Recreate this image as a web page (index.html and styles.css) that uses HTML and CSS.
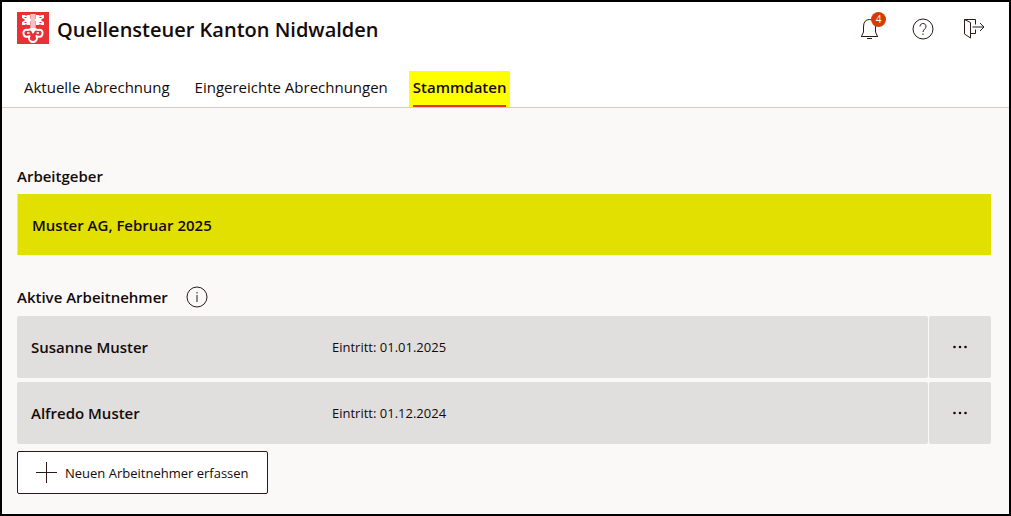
FILE: index.html
```html
<!DOCTYPE html>
<html lang="de">
<head>
    <meta charset="UTF-8">
    <meta name="viewport" content="width=device-width, initial-scale=1">
    <title>Quellensteuer Kanton Nidwalden</title>
    <link rel="stylesheet" href="styles.css">
</head>
<body>
    <div class="app">
        <header class="header">
            <div class="title-bar">
                <svg class="logo" viewBox="0 0 32 32" aria-hidden="true">
                    <rect width="32" height="32" fill="#e73137"/>
                    <!-- key bits and double shaft -->
                    <g fill="#fff">
                        <path d="M13.500 2h5v15h-5z"/>
                        <path d="M5 3h3l1 1 1-1h3v4h1v2h-1v4h-3l-1-1-1 1H5v-3l2-1v-2L5 6z"/>
                        <path d="M27 3h-3l-1 1-1-1h-3v4h-1v2h1v4h3l1-1 1 1h3v-3l-2-1v-2l2-1z"/>
                    </g>
                    <path d="M15 2v14M17 2v14" stroke="#e73137" stroke-width=".6" fill="none"/>
                    <path d="M7.500 5.500h2M7.500 10.500h2M22.500 5.500h2M22.500 10.500h2M5 8h3M24 8h3" stroke="#e73137" fill="none"/>
                    <!-- three-lobed bow of the key -->
                    <path d="M16 20.500C15 17 12.500 17 11 18C7.500 17 6 19.500 6.500 22C7 25 10.500 25.500 12.500 24C11.500 26 12 28.500 14 29.500Q16 30.500 18 29.500C20 28.500 20.500 26 19.500 24C21.500 25.500 25 25 25.500 22C26 19.500 24.500 17 21 18C19.500 17 17 17 16 20.500z" fill="none" stroke="#fff" stroke-width="2" stroke-linejoin="round"/>
                    <path d="M10 21h2.500M19.500 21H22M13 17.500h6" fill="none" stroke="#fff" stroke-width="1.500"/>
                </svg>
                <h1>Quellensteuer Kanton Nidwalden</h1>
                <div class="actions">
                    <button type="button" class="icon-button" aria-label="Benachrichtigungen">
                        <svg viewBox="0 0 22 22" aria-hidden="true">
                            <path d="M3 18.500h17M5.500 14V9q0-7.500 6-7.500t6 7.500v5l2 4.500M5.500 14l-2 4.500M9 20.500h5"/>
                        </svg>
                        <span class="badge">4</span>
                    </button>
                    <button type="button" class="icon-button" aria-label="Hilfe">
                        <svg viewBox="0 0 22 22" aria-hidden="true">
                            <circle cx="11" cy="11" r="10"/>
                            <path d="M8 8.500a3 3 0 1 1 5.200 2q-2.200 1.700-2.200 3.500M11 15.500v1.500"/>
                        </svg>
                    </button>
                    <button type="button" class="icon-button" aria-label="Abmelden">
                        <svg viewBox="0 0 22 22" aria-hidden="true">
                            <path d="M-1.500 1.500l6 3v15.500l-6-4zM-1.500 1.500h11v5M4.500 15.500h5v-4M6.500 9h11.500M14 5l4 4-4 4"/>
                        </svg>
                    </button>
                </div>
            </div>
            <nav class="tabs">
                <a href="#aktuell" class="tab">Aktuelle Abrechnung</a>
                <a href="#eingereicht" class="tab">Eingereichte Abrechnungen</a>
                <a href="#stammdaten" class="tab tab-active" aria-current="page"><span>Stammdaten</span></a>
            </nav>
        </header>

        <main class="content">
            <section class="section">
                <h2>Arbeitgeber</h2>
                <div class="employer">Muster AG, Februar 2025</div>
            </section>

            <section class="section">
                <div class="section-header">
                    <h2>Aktive Arbeitnehmer</h2>
                    <button type="button" class="info-button" aria-label="Information">
                        <svg viewBox="0 0 22 22" aria-hidden="true">
                            <circle cx="11" cy="11" r="10"/>
                            <path d="M11 9v7M11 6v1.500"/>
                        </svg>
                    </button>
                </div>
                <ul class="employees">
                    <li class="employee">
                        <div class="employee-info">
                            <span class="employee-name">Susanne Muster</span>
                            <span class="employee-date">Eintritt: 01.01.2025</span>
                        </div>
                        <button type="button" class="more-button" aria-label="Weitere Aktionen">
                            <svg viewBox="0 0 16 4" aria-hidden="true">
                                <circle cx="2.500" cy="2" r="1.300"/><circle cx="8" cy="2" r="1.300"/><circle cx="13.500" cy="2" r="1.300"/>
                            </svg>
                        </button>
                    </li>
                    <li class="employee">
                        <div class="employee-info">
                            <span class="employee-name">Alfredo Muster</span>
                            <span class="employee-date">Eintritt: 01.12.2024</span>
                        </div>
                        <button type="button" class="more-button" aria-label="Weitere Aktionen">
                            <svg viewBox="0 0 16 4" aria-hidden="true">
                                <circle cx="2.500" cy="2" r="1.300"/><circle cx="8" cy="2" r="1.300"/><circle cx="13.500" cy="2" r="1.300"/>
                            </svg>
                        </button>
                    </li>
                </ul>
                <button type="button" class="add-button">
                    <svg viewBox="0 0 21 21" aria-hidden="true">
                        <path d="M10.500 0v21M0 10.500h21"/>
                    </svg>
                    Neuen Arbeitnehmer erfassen
                </button>
            </section>
        </main>
    </div>
</body>
</html>
```

FILE: styles.css
```css
* {
    box-sizing: border-box;
}

body {
    margin: 0;
    font-family: "Open Sans", "Noto Sans", sans-serif;
    font-size: 15px;
    line-height: 20px;
    color: #140a0a;
}

h1,
h2 {
    margin: 0;
    font-weight: 600;
}

h1 {
    font-size: 20px;
    line-height: 36px;
}

h2 {
    font-size: 15px;
    line-height: 20px;
}

button {
    padding: 0;
    border: none;
    background: none;
    font-family: inherit;
    color: inherit;
    cursor: pointer;
}

svg {
    display: block;
    fill: none;
    stroke: #2b1a1a;
}

.app {
    min-height: 100vh;
    border: 2px solid #000;
    background-color: #faf9f8;
}

/* Header */
.header {
    background-color: #fff;
    border-bottom: 1px solid #d0cfce;
}

.title-bar {
    display: flex;
    align-items: flex-start;
    padding: 10px 21px 0 15px;
}

.logo {
    width: 32px;
    height: 32px;
    margin-right: 8px;
    stroke: none;
}

.actions {
    display: flex;
    gap: 32px;
    margin-left: auto;
    padding-top: 6px;
}

.icon-button {
    position: relative;
    width: 22px;
    height: 22px;
}

.icon-button svg {
    overflow: visible;
}

.badge {
    position: absolute;
    top: -6px;
    right: -6px;
    width: 15px;
    height: 15px;
    border-radius: 50%;
    background-color: #d83b01;
    color: #fff;
    font-size: 10px;
    line-height: 15px;
    text-align: center;
}

.tabs {
    display: flex;
    gap: 17px;
    padding: 23px 18px 0;
}

.tab {
    padding: 0 4px;
    line-height: 32px;
    color: inherit;
    text-decoration: none;
}

.tab-active {
    background-color: #ff0;
    font-weight: 600;
}

.tab-active span {
    display: block;
    padding-bottom: 2px;
    border-bottom: 2px solid #e73137;
}

/* Content */
.content {
    padding: 58px 18px 20px 15px;
}

.section {
    margin-bottom: 31px;
}

.section:last-child {
    margin-bottom: 0;
}

.section-header {
    display: flex;
    align-items: center;
    gap: 18px;
}

.info-button {
    width: 22px;
    height: 22px;
}

.employer {
    display: flex;
    align-items: center;
    height: 61px;
    margin-top: 8px;
    padding: 0 14px;
    border-left: 1px solid #e1dfdd;
    background-color: #e1e000;
    font-weight: 600;
}

.employees {
    margin: 8px 0 7px;
    padding: 0;
    list-style: none;
}

.employee {
    display: flex;
    gap: 1px;
    height: 62px;
    margin-bottom: 4px;
}

.employee:last-child {
    margin-bottom: 0;
}

.employee-info,
.more-button {
    display: flex;
    align-items: center;
    background-color: #e1dfdd;
    border-radius: 2px;
}

.employee-info {
    flex: 1;
    padding: 0 14px;
}

.employee-name {
    width: 301px;
    font-weight: 600;
}

.employee-date {
    font-size: 13px;
}

.more-button {
    justify-content: center;
    width: 62px;
}

.more-button svg {
    width: 16px;
    height: 4px;
    fill: #140a0a;
    stroke: none;
}

.add-button {
    display: flex;
    align-items: center;
    gap: 8px;
    height: 43px;
    padding: 0 18px;
    border: 1px solid #2b1a1a;
    border-radius: 2px;
    background-color: #fff;
    font-size: 13px;
    font-weight: 500;
}

.add-button svg {
    width: 21px;
    height: 21px;
}
```
